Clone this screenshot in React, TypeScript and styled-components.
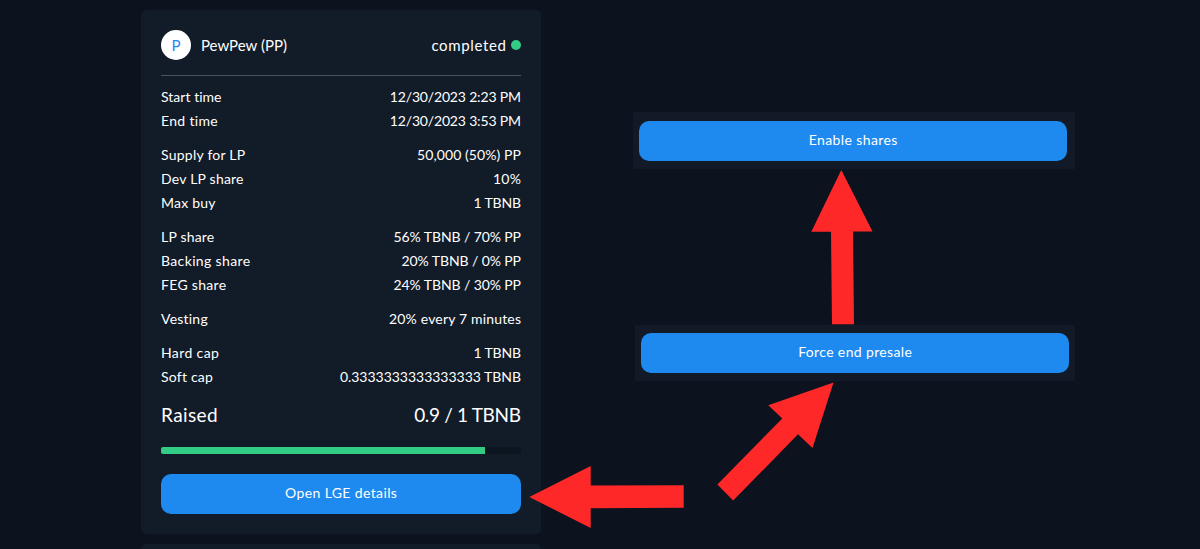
import React from "react";
import styled, { createGlobalStyle } from "styled-components";

const GlobalStyle = createGlobalStyle`
  * { box-sizing: border-box; }
  body {
    margin: 0;
    background: #0c131f;
    color: #fff;
    font-family: Lato, "Liberation Sans", sans-serif;
    font-size: 14px;
    line-height: 24px;
    overflow: hidden;
  }
`;

const Page = styled.main`
  position: relative;
  display: flex;
  align-items: flex-start;
  width: 1200px;
  height: 549px;
  overflow: hidden;
`;

const CardColumn = styled.div`
  display: flex;
  flex-direction: column;
  gap: 10px;
  flex: none;
  width: 400px;
  margin: 10px 0 0 141px;
`;

const Card = styled.section`
  display: flex;
  flex-direction: column;
  height: 524px;
  padding: 20px;
  border-radius: 5px;
  background: #121b28;
`;

const CardHeader = styled.header`
  display: flex;
  align-items: center;
  height: 46px;
  padding-bottom: 16px;
  margin-bottom: 9px;
  border-bottom: 1px solid #4b535e;
  font-size: 15px;
`;

const Avatar = styled.span`
  display: flex;
  align-items: center;
  justify-content: center;
  width: 30px;
  height: 30px;
  margin-right: 10px;
  border-radius: 50%;
  background: #fff;
  color: #2389f0;
`;

const Status = styled.span`
  display: flex;
  align-items: center;
  gap: 5px;
  margin-left: auto;
`;

const StatusDot = styled.i`
  width: 10px;
  height: 10px;
  border-radius: 50%;
  background: #33cc85;
`;

const Text = styled.span<{ $track?: number }>`
  white-space: pre;
  letter-spacing: ${({ $track = 0 }) => $track}px;
  margin-right: ${({ $track = 0 }) => -$track}px;
`;

const Group = styled.div`
  margin-bottom: 10px;
`;

const Row = styled.div`
  display: flex;
  justify-content: space-between;
  height: 24px;
`;

const Raised = styled(Row)`
  height: 32px;
  margin-bottom: 16px;
  font-size: 19px;
  line-height: 32px;
`;

const Progress = styled.div`
  flex: none;
  height: 7px;
  margin-bottom: 20px;
  border-radius: 2px;
  background: #0d1520;
  overflow: hidden;
`;

const ProgressFill = styled.div`
  height: 100%;
  background: #33cc85;
`;

const Button = styled.button`
  display: flex;
  align-items: center;
  justify-content: center;
  flex: none;
  width: 100%;
  height: 40px;
  padding: 0 0 2px;
  border: 0;
  border-radius: 10px;
  background: #1e89ef;
  color: #fff;
  font: inherit;
`;

const ActionColumn = styled.div`
  display: flex;
  flex-direction: column;
  align-items: flex-end;
  gap: 156px;
  width: 442px;
  margin: 112px 0 0 92px;
`;

const ActionPanel = styled.div<{ $width: number; $padding: string }>`
  width: ${({ $width }) => $width}px;
  padding: ${({ $padding }) => $padding};
  background: #111a26;
`;

const Arrows = styled.svg`
  position: absolute;
  inset: 0;
  fill: #ff2828;
  pointer-events: none;
`;

type Cell = [text: string, track: number];

const groups: [Cell, Cell][][] = [
  [
    [["Start time", 0.03], ["12/30/2023 2:23 PM", -0.17]],
    [["End time", 0.32], ["12/30/2023 3:53 PM", -0.17]],
  ],
  [
    [["Supply for LP", 0.24], ["50,000 (50%) PP", 0.09]],
    [["Dev LP share", 0.22], ["10%", 0.3]],
    [["Max buy", 0.22], ["1 TBNB", -0.15]],
  ],
  [
    [["LP share", 0.2], ["56% TBNB / 70% PP", -0.1]],
    [["Backing share", 0.36], ["20% TBNB / 0% PP", -0.1]],
    [["FEG share", 0.3], ["24% TBNB / 30% PP", -0.1]],
  ],
  [[["Vesting", 0.22], ["20% every 7 minutes", 0.17]]],
  [
    [["Hard cap", 0.38], ["1 TBNB", -0.15]],
    [["Soft cap", 0.22], ["0.3333333333333333 TBNB", -0.02]],
  ],
];

export default function App() {
  return (
    <>
      <GlobalStyle />
      <Page>
        <CardColumn>
          <Card>
            <CardHeader>
              <Avatar>P</Avatar>
              <Text $track={0}>PewPew (PP)</Text>
              <Status>
                <Text $track={0.65}>completed</Text>
                <StatusDot />
              </Status>
            </CardHeader>
            {groups.map((rows, i) => (
              <Group key={i}>
                {rows.map(([label, value]) => (
                  <Row key={label[0]}>
                    <Text $track={label[1]}>{label[0]}</Text>
                    <Text $track={value[1]}>{value[0]}</Text>
                  </Row>
                ))}
              </Group>
            ))}
            <Raised>
              <Text $track={0.4}>Raised</Text>
              <Text $track={-0.33}>0.9 / 1 TBNB</Text>
            </Raised>
            <Progress>
              <ProgressFill style={{ width: "90%" }} />
            </Progress>
            <Button>
              <Text $track={0.37}>Open LGE details</Text>
            </Button>
          </Card>
          <Card />
        </CardColumn>
        <ActionColumn>
          <ActionPanel $width={442} $padding="9px 8px 8px 6px">
            <Button>
              <Text $track={0.4}>Enable shares</Text>
            </Button>
          </ActionPanel>
          <ActionPanel $width={440} $padding="8px 6px 8px 6px">
            <Button>
              <Text $track={0.36}>Force end presale</Text>
            </Button>
          </ActionPanel>
        </ActionColumn>
        <Arrows width="1200" height="549" viewBox="0 0 1200 549">
          <polygon points="529.3,497 590.7,466 590.7,485.6 683.7,485.2 683.7,507.8 590.7,508.2 590.7,528" />
          <polygon points="841.3,170 872.5,231.5 853,231.5 854,324.3 832,324.3 831,231.7 811.3,231.7" />
          <polygon points="833.5,382.5 812.5,448 798,434.3 733.2,500.6 717.4,484.4 782.3,418.5 768.3,405.2" />
        </Arrows>
      </Page>
    </>
  );
}
